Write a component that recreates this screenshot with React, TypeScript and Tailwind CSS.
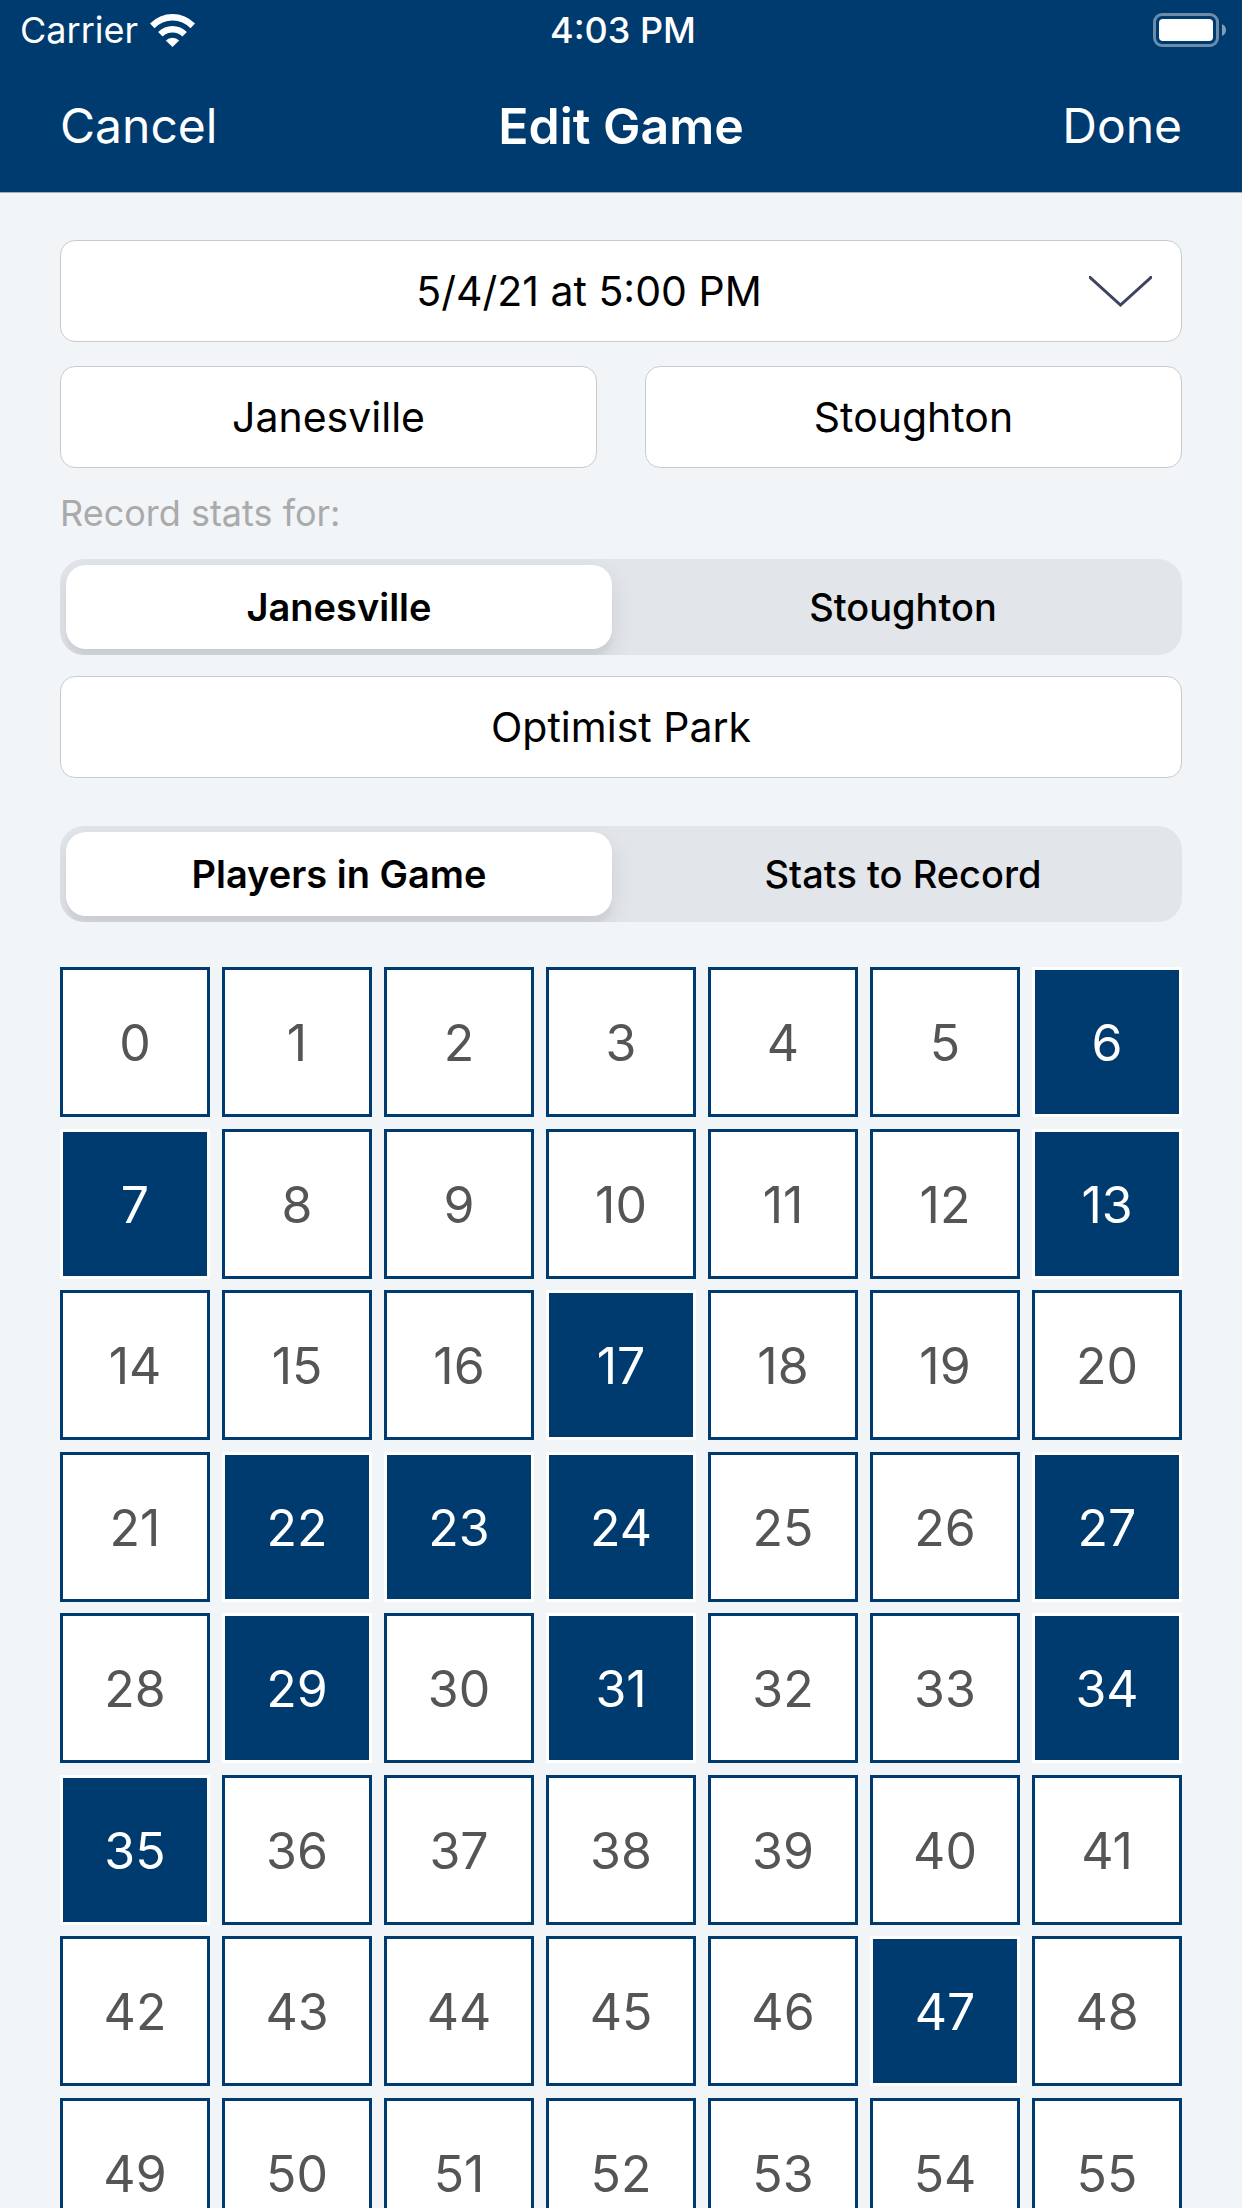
import { useState } from "react";

const INITIAL_PLAYERS = [6, 7, 13, 17, 22, 23, 24, 27, 29, 31, 34, 35, 47];
const NUMBERS = Array.from({ length: 56 }, (_, i) => i);

const fieldClass =
  "h-[102px] w-full min-w-0 rounded-[15px] border border-[#c9cacd] bg-white text-center text-[41px] text-black";

function WifiIcon() {
  return (
    <svg width="45" height="33" viewBox="0 0 45 33" fill="white" aria-hidden="true">
      <path d="M0 9.5A31.4 31.4 0 0 1 45 9.5L40.5 14.3A24.8 24.8 0 0 0 4.5 14.3Z" />
      <path d="M8.1 18A20.4 20.4 0 0 1 36.9 18L32.4 22.6A13.8 13.8 0 0 0 12.6 22.6Z" />
      <path d="M15.8 26.5A9.6 9.6 0 0 1 29.2 26.5L22.5 33Z" />
    </svg>
  );
}

function BatteryIcon() {
  return (
    <svg width="73" height="34" viewBox="0 0 73 34" fill="white" aria-hidden="true">
      <rect x="1.5" y="1.5" width="63" height="31" rx="7.5" fill="none" stroke="white" strokeOpacity="0.42" strokeWidth="3" />
      <rect x="6" y="6" width="54" height="22" rx="4" />
      <path d="M69 11Q73 13 73 17Q73 21 69 23Z" fillOpacity="0.5" />
    </svg>
  );
}

function Segmented({ name, options }: { name: string; options: string[] }) {
  const [value, setValue] = useState(options[0]);
  return (
    <div
      role="radiogroup"
      aria-label={name}
      className="relative grid h-24 grid-cols-2 gap-[18px] overflow-hidden rounded-3xl bg-[#e2e5ea] p-[6px]"
    >
      {options.map((option) => (
        <label key={option} className="flex">
          <input
            type="radio"
            name={name}
            value={option}
            checked={value === option}
            onChange={() => setValue(option)}
            className="peer sr-only"
          />
          <span className="flex flex-1 items-center justify-center rounded-[20px] text-[38px] font-medium text-black peer-checked:bg-white peer-checked:font-semibold peer-checked:shadow-[0_9px_24px_rgba(0,0,0,0.10),0_9px_3px_rgba(0,0,0,0.03)]">
            {option}
          </span>
        </label>
      ))}
    </div>
  );
}

function PlayerGrid() {
  const [selected, setSelected] = useState(() => new Set(INITIAL_PLAYERS));
  const toggle = (n: number) =>
    setSelected((prev) => {
      const next = new Set(prev);
      if (!next.delete(n)) next.add(n);
      return next;
    });

  return (
    <div className="mt-[45px] grid min-h-[1281px] grid-cols-7 content-between gap-x-3 gap-y-[11px]">
      {NUMBERS.map((n) => (
        <button
          key={n}
          type="button"
          aria-pressed={selected.has(n)}
          onClick={() => toggle(n)}
          className={
            selected.has(n)
              ? "aspect-square border-3 border-white bg-[#003b6f] pt-[3px] text-[50px] text-white"
              : "aspect-square border-3 border-[#003b6f] bg-white pt-[3px] text-[50px] text-[#555555]"
          }
        >
          {n}
        </button>
      ))}
    </div>
  );
}

export default function App() {
  return (
    <div className="flex h-screen flex-col bg-[#f1f5f8] font-['Inter','Liberation_Sans',sans-serif]">
      <header className="shrink-0 border-b border-[#a9adb3] bg-[#003b6f] text-white">
        <div className="grid h-[60px] grid-cols-[1fr_auto_1fr] items-center pr-4 pl-5 text-[36px]">
          <div className="flex items-center gap-3">
            <span>Carrier</span>
            <WifiIcon />
          </div>
          <time className="font-medium">4:03 PM</time>
          <div className="flex justify-end">
            <BatteryIcon />
          </div>
        </div>
        <div className="grid h-33 grid-cols-[1fr_auto_1fr] items-center px-15 text-[48px]">
          <button type="button" className="justify-self-start">
            Cancel
          </button>
          <h1 className="text-[50px] font-semibold">Edit Game</h1>
          <button type="button" className="justify-self-end">
            Done
          </button>
        </div>
      </header>

      <main className="min-h-0 flex-1 overflow-y-auto px-15 pt-[47px] [scrollbar-width:none]">
        <div className="flex flex-col gap-6">
          <button
            type="button"
            aria-haspopup="dialog"
            className="flex h-[102px] w-full items-center rounded-[15px] border border-[#c9cacd] bg-white pr-[29px] text-[41px] text-black"
          >
            <span className="flex-1 pt-[2px] pl-7">5/4/21 at 5:00 PM</span>
            <svg width="63" height="31" viewBox="0 0 63 31" fill="none" stroke="#3d4460" strokeWidth="3" aria-hidden="true">
              <path d="M0 0.5L31.5 29L63 0.5" />
            </svg>
          </button>
          <div className="grid grid-cols-2 gap-12">
            <input type="text" aria-label="Home team" defaultValue="Janesville" className={fieldClass} />
            <input type="text" aria-label="Away team" defaultValue="Stoughton" className={fieldClass} />
          </div>
          <p className="text-[36px] leading-[43px] text-[#aaaaaa]">Record stats for:</p>
          <Segmented name="Record stats for" options={["Janesville", "Stoughton"]} />
        </div>
        <div className="mt-[21px] mb-12 flex">
          <input type="text" aria-label="Location" defaultValue="Optimist Park" className={fieldClass} />
        </div>
        <Segmented name="Game setup" options={["Players in Game", "Stats to Record"]} />
        <PlayerGrid />
      </main>
    </div>
  );
}
